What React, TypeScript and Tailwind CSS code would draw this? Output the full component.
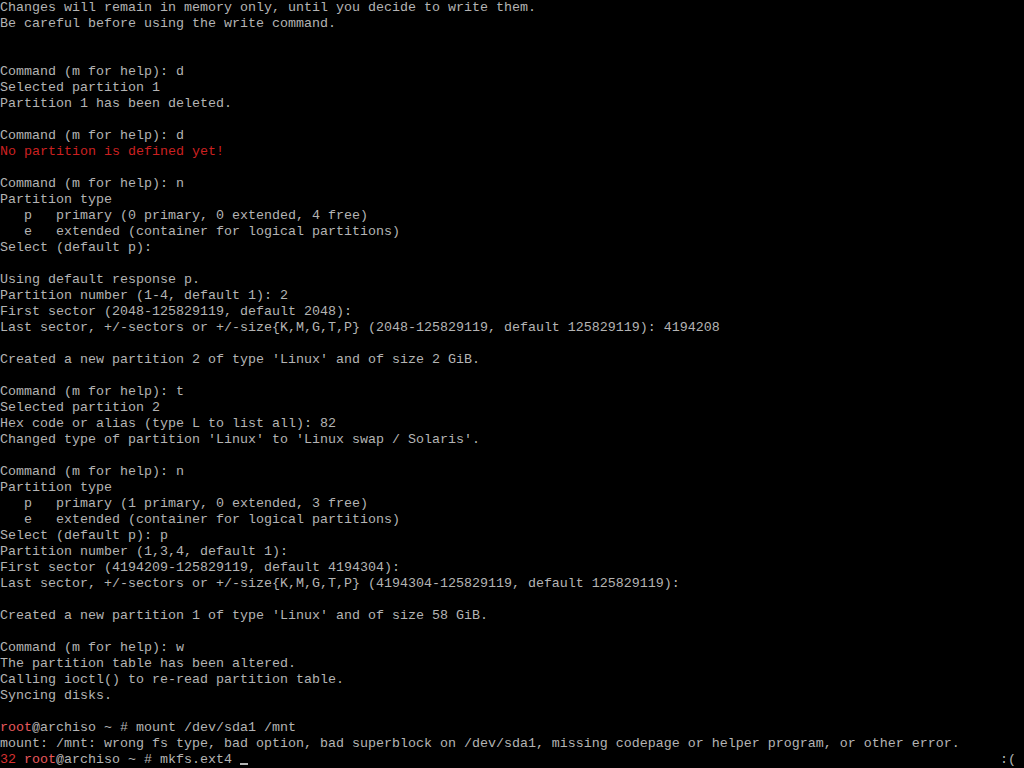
const lines: string[] = [
  "Changes will remain in memory only, until you decide to write them.",
  "Be careful before using the write command.",
  "",
  "",
  "Command (m for help): d",
  "Selected partition 1",
  "Partition 1 has been deleted.",
  "",
  "Command (m for help): d",
  "!No partition is defined yet!",
  "",
  "Command (m for help): n",
  "Partition type",
  "   p   primary (0 primary, 0 extended, 4 free)",
  "   e   extended (container for logical partitions)",
  "Select (default p):",
  "",
  "Using default response p.",
  "Partition number (1-4, default 1): 2",
  "First sector (2048-125829119, default 2048):",
  "Last sector, +/-sectors or +/-size{K,M,G,T,P} (2048-125829119, default 125829119): 4194208",
  "",
  "Created a new partition 2 of type 'Linux' and of size 2 GiB.",
  "",
  "Command (m for help): t",
  "Selected partition 2",
  "Hex code or alias (type L to list all): 82",
  "Changed type of partition 'Linux' to 'Linux swap / Solaris'.",
  "",
  "Command (m for help): n",
  "Partition type",
  "   p   primary (1 primary, 0 extended, 3 free)",
  "   e   extended (container for logical partitions)",
  "Select (default p): p",
  "Partition number (1,3,4, default 1):",
  "First sector (4194209-125829119, default 4194304):",
  "Last sector, +/-sectors or +/-size{K,M,G,T,P} (4194304-125829119, default 125829119):",
  "",
  "Created a new partition 1 of type 'Linux' and of size 58 GiB.",
  "",
  "Command (m for help): w",
  "The partition table has been altered.",
  "Calling ioctl() to re-read partition table.",
  "Syncing disks.",
  "",
];

const Prompt = () => (
  <>
    <span className="text-[#e8585c]">root</span>@archiso ~ #{" "}
  </>
);

export default function App() {
  return (
    <div className="w-[1024px] h-[768px] overflow-hidden bg-black text-[#b4b4b4] font-['Liberation_Mono',monospace] text-[13.333px] leading-4 whitespace-pre">
      {lines.map((line, i) =>
        line.startsWith("!") ? (
          <div key={i} className="h-4 text-[#cc2020]">
            {line.slice(1)}
          </div>
        ) : (
          <div key={i} className="h-4">
            {line}
          </div>
        )
      )}
      <div className="h-4">
        <Prompt />
        mount /dev/sda1 /mnt
      </div>
      <div className="h-4">
        mount: /mnt: wrong fs type, bad option, bad superblock on /dev/sda1, missing codepage or helper program, or other error.
      </div>
      <div className="h-4 flex justify-between pr-2">
        <div className="flex items-end">
          <span>
            <span className="text-[#d83030]">32</span> <Prompt />
            mkfs.ext4{" "}
          </span>
          <span className="inline-block w-2 h-[2px] mb-[3px] bg-[#b4b4b4]" />
        </div>
        <span>:(</span>
      </div>
    </div>
  );
}
